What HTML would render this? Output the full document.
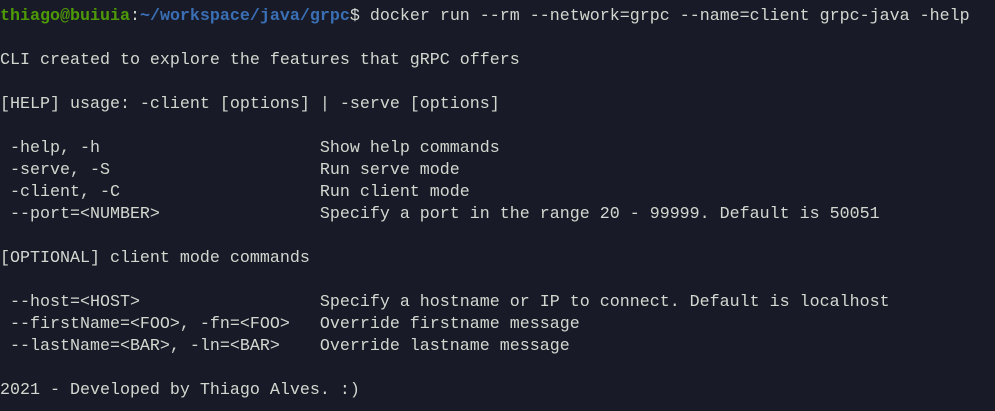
<!DOCTYPE html>
<html><head><meta charset="utf-8"><style>
html,body{margin:0;padding:0;background:#181b27;width:995px;height:411px;overflow:hidden}
pre{margin:0;padding:6px 0 0 0;font-family:"Liberation Mono","DejaVu Sans Mono",monospace;font-size:16.67px;line-height:22px;color:#d3d7cf;white-space:pre}
.g{color:#4e9a06;font-weight:bold}.b{color:#3a6fb5;font-weight:bold}
</style></head><body><pre><span class="g">thiago@buiuia</span>:<span class="b">~/workspace/java/grpc</span>$ docker run --rm --network=grpc --name=client grpc-java -help

CLI created to explore the features that gRPC offers

[HELP] usage: -client [options] | -serve [options]

 -help, -h                      Show help commands
 -serve, -S                     Run serve mode
 -client, -C                    Run client mode
 --port=&lt;NUMBER&gt;                Specify a port in the range 20 - 99999. Default is 50051

[OPTIONAL] client mode commands

 --host=&lt;HOST&gt;                  Specify a hostname or IP to connect. Default is localhost
 --firstName=&lt;FOO&gt;, -fn=&lt;FOO&gt;   Override firstname message
 --lastName=&lt;BAR&gt;, -ln=&lt;BAR&gt;    Override lastname message

2021 - Developed by Thiago Alves. :)</pre></body></html>
